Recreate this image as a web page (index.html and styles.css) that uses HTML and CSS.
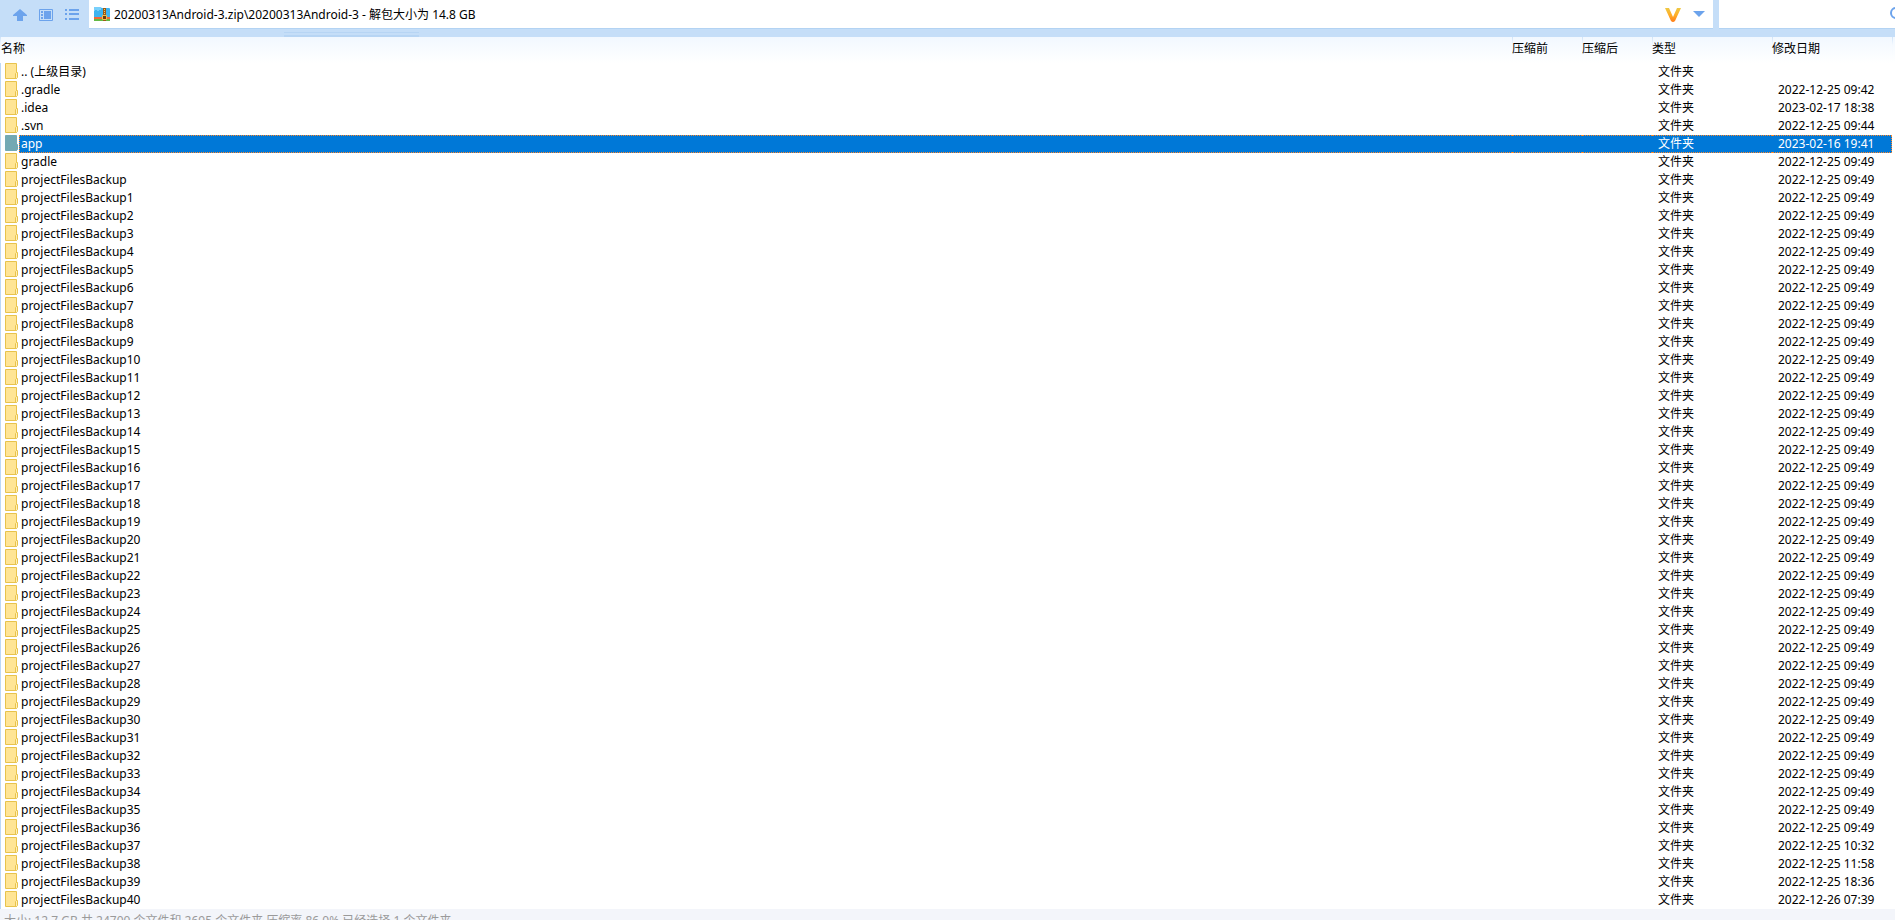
FILE: index.html
```html
<!DOCTYPE html>
<html lang="zh-CN">
<head>
    <meta charset="UTF-8">
    <meta name="viewport" content="width=device-width, initial-scale=1.0">
    <title>20200313Android-3.zip</title>
    <link rel="stylesheet" href="styles.css">
</head>
<body>

    <!-- Toolbar: navigation, address, search -->
    <div class="toolbar">
        <div class="nav">
            <button type="button" aria-label="上级目录">
                <svg width="14" height="12" viewBox="0 0 14 12"><path d="M7 0L14 6V7H10V12H4V7H0V6Z" fill="#6ca3ec"/></svg>
            </button>
            <button type="button" aria-label="预览">
                <svg width="14" height="12" viewBox="0 0 14 12"><path d="M.5 .5H13.500V11.500H.5Z" fill="none" stroke="#6ca3ec"/><path d="M2 2H4V4H2ZM2 5H4V7H2ZM2 8H4V10H2ZM5 2H12V10H5Z" fill="#6ca3ec"/></svg>
            </button>
            <button type="button" aria-label="列表">
                <svg width="14" height="11" viewBox="0 0 14 11"><path d="M0 0H2V2H0ZM4 0H14V2H4ZM0 4H2V6H0ZM4 4H14V6H4ZM0 9H2V11H0ZM4 9H14V11H4Z" fill="#6ca3ec"/></svg>
            </button>
        </div>
        <div class="address">
            <svg class="zip" width="16" height="14" viewBox="0 0 16 14">
                <path d="M0 1Q0 0 1 0H6L8 1H15Q16 1 16 2V10H0Z" fill="#3fb4f0"/>
                <path d="M0 0H7V3H5V4H3V3H1V4H0Z" fill="#79d0fb"/>
                <path d="M0 10H16V12H0Z" fill="#f2683a"/>
                <path d="M0 12H16V14H0Z" fill="#63b944"/>
                <path d="M9 1H12V14H9Z" fill="#9c5a14"/>
                <path d="M10 2H11V3H10ZM10 4H11V5H10ZM10 6H11V7H10Z" fill="#f5c95b"/>
                <path d="M8.500 8.500H12.500V12.500H8.500Z" fill="#6b3d10" stroke="#f0c052"/>
            </svg>
            <input class="path" type="text" aria-label="路径" value="20200313Android-3.zip\20200313Android-3 - 解包大小为 14.8 GB">
            <svg class="vip" width="16" height="14" viewBox="0 0 16 14">
                <defs><linearGradient id="gold" x1="0" y1="0" x2="0" y2="1"><stop offset="0" stop-color="#edc844"/><stop offset=".5" stop-color="#ffae27"/><stop offset="1" stop-color="#ff7c18"/></linearGradient></defs>
                <path d="M0 0H4L8 9L12 0H16L10 13Q8 15 6 13Z" fill="url(#gold)"/>
            </svg>
            <button type="button" class="drop" aria-label="历史记录">
                <svg width="12" height="6" viewBox="0 0 12 6"><path d="M0 0H12L6 6Z" fill="#6ca3ec"/></svg>
            </button>
        </div>
        <div class="search">
            <input type="text" aria-label="搜索">
            <svg width="5" height="14" viewBox="0 0 5 14"><circle cx="6" cy="6" r="5" fill="none" stroke="#6ca3ec" stroke-width="2"/></svg>
        </div>
    </div>

    <!-- File list -->
    <table class="files">
        <colgroup>
            <col>
            <col class="col-size">
            <col class="col-size">
            <col class="col-info">
            <col class="col-info">
            <col class="col-end">
        </colgroup>
        <thead>
            <tr>
                <th>名称</th>
                <th>压缩前</th>
                <th>压缩后</th>
                <th>类型</th>
                <th>修改日期</th>
                <th></th>
            </tr>
        </thead>
        <tbody id="fileList"></tbody>
    </table>

    <div class="status">大小: 12.7 GB 共 24700 个文件和 2695 个文件夹 压缩率 86.0% 已经选择 1 个文件夹</div>

    <script>
        const files = [
            ['.. (上级目录)', ''],
            ['.gradle', '2022-12-25 09:42'],
            ['.idea', '2023-02-17 18:38'],
            ['.svn', '2022-12-25 09:44'],
            ['app', '2023-02-16 19:41'],
            ['gradle', '2022-12-25 09:49'],
            ['projectFilesBackup', '2022-12-25 09:49']
        ];

        const laterDates = {
            37: '2022-12-25 10:32',
            38: '2022-12-25 11:58',
            39: '2022-12-25 18:36',
            40: '2022-12-26 07:39'
        };

        for (let i = 1; i <= 40; i++) {
            files.push(['projectFilesBackup' + i, laterDates[i] || '2022-12-25 09:49']);
        }

        const folderIcon = '<svg class="folder" width="13" height="16" viewBox="0 0 13 16">' +
            '<path class="folder-body" d="M.5 .5H11.500V15.500H.5Z"/>' +
            '<path class="folder-tab" d="M10.500 15.500V10.500L11.500 9.500H12.500V14.500L11.500 15.500Z"/></svg>';

        const list = document.getElementById('fileList');

        files.forEach(([name, date]) => {
            const row = document.createElement('tr');
            if (name === 'app') {
                row.className = 'selected';
            }
            row.innerHTML = `
                <td class="name"><div class="entry">${folderIcon}<span class="label">${name}</span></div></td>
                <td></td>
                <td></td>
                <td class="type">文件夹</td>
                <td class="date">${date}</td>
                <td class="end"></td>`;
            list.appendChild(row);
        });
    </script>

</body>
</html>
```
FILE: styles.css
```css
* {
    box-sizing: border-box;
}
body {
    margin: 0;
    height: 100vh;
    overflow: hidden;
    background-color: #fff;
    color: #000;
    font-family: "Noto Sans", "Noto Sans CJK SC", sans-serif;
    font-size: 12px;
}
button {
    display: flex;
    padding: 0;
    border: none;
    background: none;
    cursor: pointer;
}
input {
    min-width: 0;
    padding: 0;
    border: none;
    outline: none;
    background: none;
    color: inherit;
    font: inherit;
}
.toolbar {
    display: flex;
    height: 37px;
    padding-bottom: 8px;
    background:
        linear-gradient(#b7d5f4, #b7d5f4) 284px 32px / 135px 1px no-repeat,
        linear-gradient(#b7d5f4, #b7d5f4) 284px 35px / 135px 2px no-repeat,
        #c5def8;
}
.nav {
    display: flex;
    align-items: center;
    gap: 12px;
    width: 89px;
    padding-left: 13px;
}
.address,
.search {
    display: flex;
    align-items: center;
    background-color: #fff;
    border-bottom: 1px solid #b3d3f3;
}
.address {
    flex: 1;
    padding: 0 8px 0 5px;
}
.path {
    flex: 1;
    margin-left: 4px;
}
.vip {
    margin-top: 1px;
}
.drop {
    margin-left: 12px;
}
.search {
    width: 176px;
    margin-left: 6px;
}
.search input {
    flex: 1;
}
.files {
    width: 100%;
    table-layout: fixed;
    border-collapse: separate;
    border-spacing: 0;
}
.col-size {
    width: 70px;
}
.col-info {
    width: 120px;
}
.col-end {
    width: 3px;
}
th {
    height: 26px;
    padding: 0 0 2px;
    background:
        linear-gradient(#cfe3f8, #f4f9ff 30%, #fff) 0 0 / 1px 100% no-repeat,
        linear-gradient(#f2f8ff, #fff);
    font-weight: normal;
    line-height: 20px;
    text-align: left;
    white-space: nowrap;
}
th:first-child {
    padding-left: 1px;
}
td {
    height: 18px;
    padding: 0;
    border-top: 1px solid transparent;
    border-bottom: 1px solid transparent;
    line-height: 16px;
    white-space: nowrap;
}
.name {
    padding-left: 4px;
    border-top: none;
    border-bottom: none;
    border-left: 1px solid #bcd8f6;
}
.type,
.date {
    padding-left: 6px;
}
.entry {
    display: flex;
    align-items: flex-start;
}
.label {
    flex: 1;
    height: 18px;
    margin-left: 1px;
    padding-left: 1px;
    border: 1px solid transparent;
    border-right: none;
}
.folder-body {
    fill: #ffe595;
    stroke: #e8c34c;
}
.folder-tab {
    fill: #fff0b8;
    stroke: #e8c34c;
}
.selected td,
.selected .label {
    background-color: #0078d7;
    border-color: #ff8728;
    border-top-style: dotted;
    border-bottom-style: dotted;
    color: #fff;
}
.selected .label {
    border-left-style: dotted;
}
.selected .date {
    border-right: 1px dotted #ff8728;
}
.selected .name {
    background: none;
    border-top: none;
    border-bottom: none;
    border-left-color: #bcd8f6;
}
.selected .end {
    background: none;
    border-color: transparent;
}
.selected .folder-body,
.selected .folder-tab {
    fill: #73a9b3;
    stroke: #73a9b3;
}
.status {
    height: 30px;
    padding: 3px 4px;
    background-color: #f3f5fa;
    color: #9a9a9a;
    line-height: 18px;
    white-space: nowrap;
}
```
